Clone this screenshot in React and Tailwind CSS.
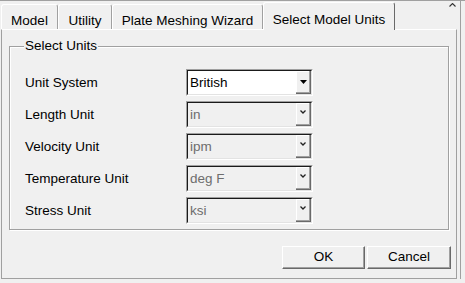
import React from 'react';

const tabs = [
  { label: 'Model', w: 'w-[57px]' },
  { label: 'Utility', w: 'w-[54px]' },
  { label: 'Plate Meshing Wizard', w: 'w-[151px]' },
];

const rows = [
  { label: 'Unit System', value: 'British', enabled: true },
  { label: 'Length Unit', value: 'in' },
  { label: 'Velocity Unit', value: 'ipm' },
  { label: 'Temperature Unit', value: 'deg F' },
  { label: 'Stress Unit', value: 'ksi' },
];

const Arrow = ({ enabled }) =>
  enabled ? (
    <svg width="7" height="4" viewBox="0 0 7 4">
      <path d="M0 0h7L3.5 4z" fill="#000" />
    </svg>
  ) : (
    <svg width="6" height="4" viewBox="0 0 6 4" className="-mt-[4px]">
      <path d="M0.5 0.5L3 3L5.5 0.5" fill="none" stroke="#222" strokeWidth="1.3" />
    </svg>
  );

const Combo = ({ value, enabled }) => (
  <div className="w-[127px] h-[27px] flex border border-t-[#a0a0a0] border-l-[#a0a0a0] border-r-white border-b-white">
    <div
      className={`flex-1 flex border border-t-[#1a1a1a] border-l-[#1a1a1a] border-r-[#e3e3e3] border-b-[#e3e3e3] ${
        enabled ? 'bg-white text-black' : 'bg-[#f0f0f0] text-[#6d6d6d]'
      }`}
    >
      <div className="flex-1 flex items-center pl-[2px] leading-none">{value}</div>
      <div className="w-[15px] flex items-center justify-center bg-[#f0f0f0] border-r border-b border-r-[#696969] border-b-[#696969] shadow-[inset_-1px_-1px_0_#a0a0a0,inset_1px_1px_0_#fff]">
        <Arrow enabled={enabled} />
      </div>
    </div>
  </div>
);

const Button = ({ children, w }) => (
  <button
    className={`${w} h-[23px] flex items-center justify-center bg-[#f0f0f0] border border-t-white border-l-white border-r-[#696969] border-b-[#696969] shadow-[inset_-1px_-1px_0_#a0a0a0]`}
  >
    {children}
  </button>
);

export default function App() {
  return (
    <div className="w-[465px] h-[283px] bg-[#f0f0f0] border-t border-[#a0a0a0] font-['Liberation_Sans',Arial,sans-serif] text-[13.5px] text-black overflow-hidden">
      <div className="ml-px w-[460px] h-[278px] border-r border-[#a0a0a0] flex flex-col">
        {/* tabs */}
        <div className="h-[28px] flex items-end">
          {tabs.map((t) => (
            <div
              key={t.label}
              className={`${t.w} h-[25px] flex justify-center pt-[9px] border-l border-t border-r border-l-white border-t-white border-r-[#a0a0a0] rounded-t-[3px] leading-none`}
            >
              {t.label}
            </div>
          ))}
          <div className="w-[132px] h-[28px] -mb-px relative z-10 bg-[#f0f0f0] flex justify-center pt-[10px] border-l border-t border-r border-l-white border-t-white border-r-[#696969] rounded-t-[3px] leading-none">
            Select Model Units
          </div>
          <div className="ml-auto self-start mt-[2px] mr-[4px]">
            <svg width="7" height="4" viewBox="0 0 7 4">
              <path d="M0.5 3.5L3.5 0.5L6.5 3.5" fill="none" stroke="#333" strokeWidth="1.1" />
            </svg>
          </div>
        </div>

        {/* panel */}
        <div className="w-[456px] h-[250px] flex flex-col border border-t-white border-l-[#a0a0a0] border-r-[#a0a0a0] border-b-[#a0a0a0]">
          <div className="relative ml-[7px] mt-[16px] w-[440px] h-[184px] border border-[#a0a0a0] shadow-[inset_1px_1px_0_#fff,1px_1px_0_#fff]">
            <div className="absolute -top-[9px] left-[14px] px-px bg-[#f0f0f0] leading-[16px]">Select Units</div>
            <div className="pt-[22px] pl-[15px] flex flex-col gap-[5px]">
              {rows.map((r) => (
                <div key={r.label} className="h-[27px] flex items-center">
                  <div className="w-[161px] pt-[2px]">{r.label}</div>
                  <Combo value={r.value} enabled={r.enabled} />
                </div>
              ))}
            </div>
          </div>
          <div className="mt-[16px] pr-[5px] flex justify-end gap-[2px]">
            <Button w="w-[83px]">OK</Button>
            <Button w="w-[84px]">Cancel</Button>
          </div>
        </div>
      </div>
    </div>
  );
}
